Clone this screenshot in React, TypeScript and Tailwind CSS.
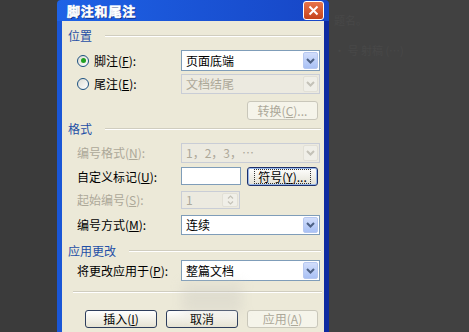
import React from "react";

const Chevron = ({ color }: { color: string }) => (
  <svg width="9" height="6" viewBox="0 0 9 6">
    <path d="M1 1 L4.5 4.5 L8 1" stroke={color} strokeWidth="2" fill="none" />
  </svg>
);

const Select = ({ text, disabled }: { text: string; disabled?: boolean }) => (
  <div
    className={
      "w-[139px] h-full flex items-center border " +
      (disabled ? "border-[#c9cdd6] bg-[#eceae0]" : "border-[#7f9db9] bg-white")
    }
  >
    <span className={"flex-1 pl-[4px] leading-none " + (disabled ? "text-[#aca899]" : "text-black")}>{text}</span>
    <div
      className={
        "w-[15px] h-[calc(100%-2px)] mr-[1px] flex items-center justify-center rounded-[2px] border " +
        (disabled
          ? "bg-[#f0efe8] border-[#e2e0d6]"
          : "bg-gradient-to-b from-[#d2defb] to-[#a9c1f5] border-[#b7c8f0]")
      }
    >
      <Chevron color={disabled ? "#c4c2b8" : "#4d6185"} />
    </div>
  </div>
);

const Btn = ({
  children,
  disabled,
  focused,
  w,
}: {
  children: React.ReactNode;
  disabled?: boolean;
  focused?: boolean;
  w: string;
}) => (
  <div
    className={
      w +
      " h-full rounded-[3px] border flex items-center justify-center " +
      (disabled
        ? "border-[#c9c7ba] bg-[#f5f4ea] text-[#aca899]"
        : focused
        ? "border-[#1b2f6b] bg-gradient-to-b from-[#ffffff] to-[#e3e1d4] text-black shadow-[inset_0_0_0_1px_#98b8ea]"
        : "border-[#2d3d5c] bg-gradient-to-b from-[#ffffff] to-[#e6e3d3] text-black")
    }
  >
    <span className={focused ? "outline outline-1 outline-dotted outline-[#333] px-[3px] leading-[13px]" : "leading-none"}>
      {children}
    </span>
  </div>
);

const Header = ({ text }: { text: string }) => (
  <div className="flex items-center h-[14px] pl-[6px] pr-[3px]">
    <span className="text-[#1f4fa6] leading-none">{text}</span>
    <div className="flex-1 ml-[13px] border-t border-[#d0cdbf] border-b border-b-white" />
  </div>
);

const Label = ({ children, disabled }: { children: React.ReactNode; disabled?: boolean }) => (
  <div className={"w-[104px] leading-none " + (disabled ? "text-[#aca899]" : "text-black")}>{children}</div>
);

const Radio = ({ checked }: { checked?: boolean }) => (
  <div className="w-[12px] h-[12px] rounded-full border border-[#1c5180] bg-gradient-to-br from-[#dcdcd4] to-white flex items-center justify-center mr-[5px]">
    {checked && <div className="w-[5px] h-[5px] rounded-full bg-[#21a121]" />}
  </div>
);

export default function App() {
  return (
    <div className="w-[469px] h-[332px] overflow-hidden flex bg-[#3c3c3c] font-['Noto_Sans_CJK_SC','Noto_Sans',sans-serif] text-[12px]">
      <div className="w-[57px] h-full bg-[#3b3b3b]" />
      <div className="w-[272px] h-full flex flex-col">
        <div className="h-[21px] flex items-center pl-[10px] pr-[5px] rounded-t-[4px] bg-gradient-to-r from-[#1e62e6] to-[#1746c6]">
          <span className="text-white font-bold text-[13px] tracking-[0.8px] leading-none [-webkit-text-stroke:0.6px_white] [text-shadow:1px_1px_#0a2470]">
            脚注和尾注
          </span>
          <div className="ml-auto w-[21px] h-[19px] rounded-[3px] border border-white bg-gradient-to-b from-[#e8744a] to-[#c5421a] flex items-center justify-center">
            <svg width="11" height="11" viewBox="0 0 11 11">
              <path d="M1.5 1.5 L9.5 9.5 M9.5 1.5 L1.5 9.5" stroke="white" strokeWidth="2" />
            </svg>
          </div>
        </div>
        <div className="flex-1 relative flex flex-col bg-[#ece9d8] border-l-[5px] border-l-[#1a56d6] border-r-[5px] border-r-[#0d2aa0]">
          <div className="mt-[8px]">
            <Header text="位置" />
          </div>
          <div className="mt-[7px] h-[21px] flex items-center pl-[15px]">
            <div className="w-[104px] flex items-center">
              <Radio checked />
              <span className="leading-none">脚注(<u>F</u>):</span>
            </div>
            <Select text="页面底端" />
          </div>
          <div className="mt-[3px] h-[20px] flex items-center pl-[15px]">
            <div className="w-[104px] flex items-center">
              <Radio />
              <span className="leading-none">尾注(<u>E</u>):</span>
            </div>
            <Select text="文档结尾" disabled />
          </div>
          <div className="mt-[7px] h-[19px] flex pl-[185px]">
            <Btn w="w-[71px]" disabled>
              转换(<u>C</u>)...
            </Btn>
          </div>
          <div className="mt-[2px]">
            <Header text="格式" />
          </div>
          <div className="mt-[7px] h-[20px] flex items-center pl-[15px]">
            <Label disabled>
              编号格式(<u>N</u>):
            </Label>
            <Select text="1，2，3，…" disabled />
          </div>
          <div className="mt-[4px] h-[19px] flex items-center pl-[15px]">
            <Label>
              自定义标记(<u>U</u>):
            </Label>
            <div className="w-[60px] h-[18px] self-start border border-[#7f9db9] bg-white" />
            <div className="ml-[6px] h-[19px] flex">
              <Btn w="w-[71px]" focused>
                符号(<u>Y</u>)...
              </Btn>
            </div>
          </div>
          <div className="mt-[5px] h-[18px] flex items-center pl-[15px]">
            <Label disabled>
              起始编号(<u>S</u>):
            </Label>
            <div className="w-[59px] h-full border border-[#c9cdd6] bg-[#eceae0] flex items-center">
              <span className="flex-1 pl-[4px] text-[#aca899] leading-none">1</span>
              <div className="w-[16px] h-[calc(100%-2px)] mr-[1px] flex flex-col rounded-[2px] border border-[#e2e0d6] bg-[#f0efe8] items-center justify-center gap-[2px]">
                <svg width="7" height="4" viewBox="0 0 7 4">
                  <path d="M1 3.5 L3.5 1 L6 3.5" stroke="#c4c2b8" strokeWidth="1.2" fill="none" />
                </svg>
                <svg width="7" height="4" viewBox="0 0 7 4">
                  <path d="M1 0.5 L3.5 3 L6 0.5" stroke="#c4c2b8" strokeWidth="1.2" fill="none" />
                </svg>
              </div>
            </div>
          </div>
          <div className="mt-[6px] h-[20px] flex items-center pl-[15px]">
            <Label>
              编号方式(<u>M</u>):
            </Label>
            <Select text="连续" />
          </div>
          <div className="mt-[9px]">
            <Header text="应用更改" />
          </div>
          <div className="mt-[2px] h-[21px] flex items-center pl-[15px]">
            <Label>
              将更改应用于(<u>P</u>):
            </Label>
            <Select text="整篇文档" />
          </div>
          <div className="mt-[10px] ml-[11px] mr-[2px] border-t border-[#d0cdbf] border-b border-b-white" />
          <div className="mt-[17px] h-[18px] flex pl-[23px] gap-[9px]">
            <Btn w="w-[72px]">
              插入(<u>I</u>)
            </Btn>
            <Btn w="w-[72px]">取消</Btn>
            <Btn w="w-[71px]" disabled>
              应用(<u>A</u>)
            </Btn>
          </div>
          <div className="absolute left-[120px] top-[262px] w-[60px] h-[30px] bg-[#cfcdc4] opacity-40 blur-[6px]" />
        </div>
      </div>
      <div className="flex-1 h-full bg-[#414141] pl-[5px] pt-[15px] flex flex-col gap-[19px] text-[#484848] text-[11px]">
        <span className="leading-none">题名。</span>
        <span className="leading-none">• 号 射稿 (…)</span>
      </div>
    </div>
  );
}
